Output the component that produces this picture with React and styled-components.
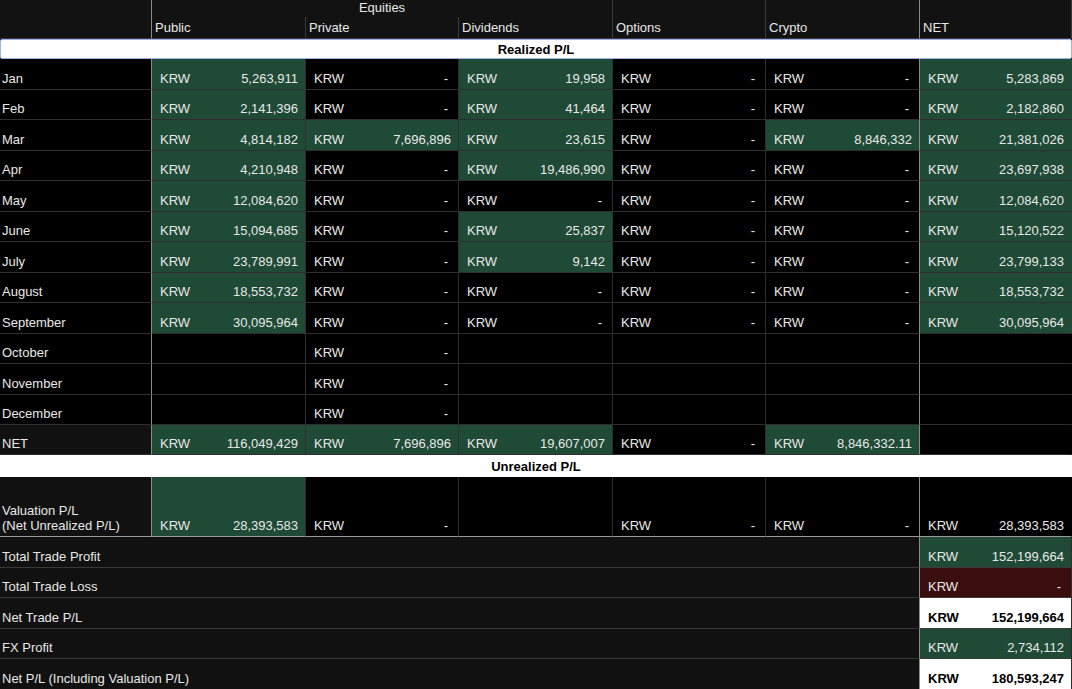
import React from "react"
import styled, { createGlobalStyle } from "styled-components"

const Global = createGlobalStyle`
  body { margin: 0; background: #000; font-family: "Liberation Sans", Arial, sans-serif; }
`

const COLS = "152px 154px 153px 154px 153px 154px 152px"

const Sheet = styled.div`
  width: 1072px;
  height: 689px;
  overflow: hidden;
  background: #000;
  color: #e8e8e8;
  font-size: 13px;
`

const Row = styled.div`
  display: grid;
  grid-template-columns: ${COLS};
  height: ${p => p.h}px;
`

const Head = styled.div`
  background: #121212;
  border-right: 1px solid ${p => (p.strong ? "#8a8a8a" : "#3a3a3a")};
  border-bottom: 1px solid #3a3a3a;
  padding: 0 3px 3px;
  display: flex;
  align-items: flex-end;
  justify-content: ${p => (p.center ? "center" : "flex-start")};
  grid-column: ${p => p.span || "auto"};
  box-sizing: border-box;
`

const Band = styled.div`
  height: ${p => p.h}px;
  background: #fff;
  color: #000;
  font-weight: bold;
  display: flex;
  align-items: center;
  justify-content: center;
  box-sizing: border-box;
  border: ${p => (p.selected ? "1px solid #9fb4e8" : "none")};
  border-radius: ${p => (p.selected ? "2px" : "0")};
`

const Label = styled.div`
  background: ${p => p.bg || "#000"};
  border-right: 1px solid #8a8a8a;
  border-bottom: 1px solid ${p => p.line || "#2e2e2e"};
  padding: 0 3px 3px 2px;
  display: flex;
  align-items: flex-end;
  line-height: 15px;
  grid-column: ${p => p.span || "auto"};
  box-sizing: border-box;
`

const BG = { g: "#1f4a35", b: "#000", r: "#3a0e0f", w: "#fff" }

const Cell = styled.div`
  background: ${p => BG[p.bg]};
  color: ${p => (p.bg === "w" ? "#000" : "#e8e8e8")};
  font-weight: ${p => (p.bg === "w" ? "bold" : "normal")};
  border-right: 1px solid ${p => (p.last ? "transparent" : p.strong ? "#8a8a8a" : "#2e2e2e")};
  border-bottom: 1px solid ${p => p.line || "#2e2e2e"};
  padding: 0 7px 3px 8px;
  display: flex;
  align-items: flex-end;
  justify-content: space-between;
  box-sizing: border-box;
`

const Dash = styled.span`
  padding-right: 3px;
`

const months = [
  ["Jan", ["g", "5,263,911"], ["b", "-"], ["g", "19,958"], ["b", "-"], ["b", "-"], ["g", "5,283,869"]],
  ["Feb", ["g", "2,141,396"], ["b", "-"], ["g", "41,464"], ["b", "-"], ["b", "-"], ["g", "2,182,860"]],
  ["Mar", ["g", "4,814,182"], ["g", "7,696,896"], ["g", "23,615"], ["b", "-"], ["g", "8,846,332"], ["g", "21,381,026"]],
  ["Apr", ["g", "4,210,948"], ["b", "-"], ["g", "19,486,990"], ["b", "-"], ["b", "-"], ["g", "23,697,938"]],
  ["May", ["g", "12,084,620"], ["b", "-"], ["b", "-"], ["b", "-"], ["b", "-"], ["g", "12,084,620"]],
  ["June", ["g", "15,094,685"], ["b", "-"], ["g", "25,837"], ["b", "-"], ["b", "-"], ["g", "15,120,522"]],
  ["July", ["g", "23,789,991"], ["b", "-"], ["g", "9,142"], ["b", "-"], ["b", "-"], ["g", "23,799,133"]],
  ["August", ["g", "18,553,732"], ["b", "-"], ["b", "-"], ["b", "-"], ["b", "-"], ["g", "18,553,732"]],
  ["September", ["g", "30,095,964"], ["b", "-"], ["b", "-"], ["b", "-"], ["b", "-"], ["g", "30,095,964"]],
  ["October", ["b"], ["b", "-"], ["b"], ["b"], ["b"], ["b"]],
  ["November", ["b"], ["b", "-"], ["b"], ["b"], ["b"], ["b"]],
  ["December", ["b"], ["b", "-"], ["b"], ["b"], ["b"], ["b"]],
]

const netRow = ["NET", ["g", "116,049,429"], ["g", "7,696,896"], ["g", "19,607,007"], ["b", "-"], ["g", "8,846,332.11"], ["b"]]
const valRow = [["g", "28,393,583"], ["b", "-"], ["b"], ["b", "-"], ["b", "-"], ["b", "28,393,583"]]

const totals = [
  ["Total Trade Profit", "g", "152,199,664"],
  ["Total Trade Loss", "r", "-"],
  ["Net Trade P/L", "w", "152,199,664"],
  ["FX Profit", "g", "2,734,112"],
  ["Net P/L (Including Valuation P/L)", "w", "180,593,247"],
]

const Value = ({ bg, val, i, line }) => (
  <Cell bg={bg} strong={i === 4} last={i === 5} line={line}>
    {val !== undefined && <span>KRW</span>}
    {val === "-" ? <Dash>-</Dash> : val !== undefined && <span>{val}</span>}
  </Cell>
)

export default function App() {
  return (
    <Sheet>
      <Global />
      <Row h={17}>
        <Head strong />
        <Head center span="span 3">Equities</Head>
        <Head />
        <Head strong />
        <Head />
      </Row>
      <Row h={22}>
        <Head strong />
        <Head>Public</Head>
        <Head>Private</Head>
        <Head>Dividends</Head>
        <Head>Options</Head>
        <Head strong>Crypto</Head>
        <Head>NET</Head>
      </Row>
      <Band h={20} selected>Realized P/L</Band>
      {months.map(([name, ...cells]) => (
        <Row h={30.5} key={name}>
          <Label>{name}</Label>
          {cells.map(([bg, val], i) => <Value key={i} bg={bg} val={val} i={i} />)}
        </Row>
      ))}
      <Row h={30}>
        <Label bg="#111">{netRow[0]}</Label>
        {netRow.slice(1).map(([bg, val], i) => <Value key={i} bg={bg} val={val} i={i} />)}
      </Row>
      <Band h={22}>Unrealized P/L</Band>
      <Row h={60}>
        <Label bg="#111" line="#9a9a9a">Valuation P/L<br />(Net Unrealized P/L)</Label>
        {valRow.map(([bg, val], i) => <Value key={i} bg={bg} val={val} i={i} line="#9a9a9a" />)}
      </Row>
      {totals.map(([name, bg, val]) => (
        <Row h={30.5} key={name}>
          <Label bg="#111" span="span 6" line="#3a3a3a">{name}</Label>
          <Value bg={bg} val={val} i={6} line="#3a3a3a" />
        </Row>
      ))}
    </Sheet>
  )
}
